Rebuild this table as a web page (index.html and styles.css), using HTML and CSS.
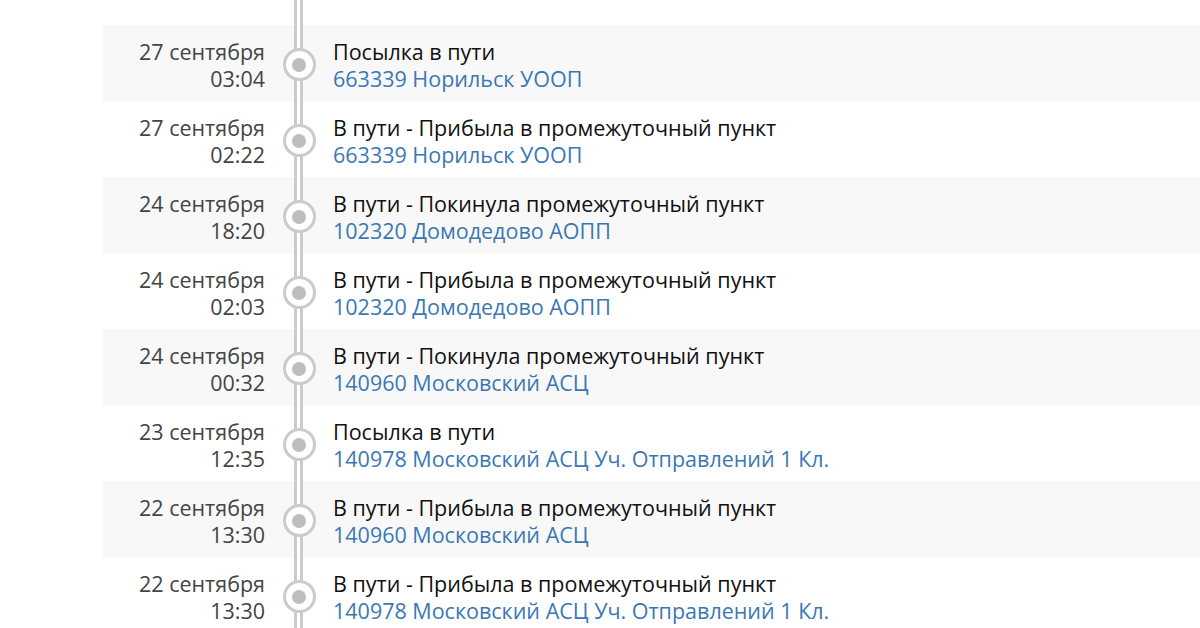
FILE: index.html
```html
<!DOCTYPE html>
<html lang="ru">
<head>
<meta charset="utf-8">
<link rel="stylesheet" href="styles.css">
</head>
<body>
<div class="track">
  <div class="row spacer"><div class="date"></div><div class="axis"></div><div class="info"></div></div>

  <div class="row alt">
    <div class="date">27 сентября<br>03:04</div>
    <div class="axis"><span class="dot"></span></div>
    <div class="info"><div class="title">Посылка в пути</div><div class="place">663339 Норильск УООП</div></div>
  </div>
  <div class="row">
    <div class="date">27 сентября<br>02:22</div>
    <div class="axis"><span class="dot"></span></div>
    <div class="info"><div class="title">В пути - Прибыла в промежуточный пункт</div><div class="place">663339 Норильск УООП</div></div>
  </div>
  <div class="row alt">
    <div class="date">24 сентября<br>18:20</div>
    <div class="axis"><span class="dot"></span></div>
    <div class="info"><div class="title">В пути - Покинула промежуточный пункт</div><div class="place">102320 Домодедово АОПП</div></div>
  </div>
  <div class="row">
    <div class="date">24 сентября<br>02:03</div>
    <div class="axis"><span class="dot"></span></div>
    <div class="info"><div class="title">В пути - Прибыла в промежуточный пункт</div><div class="place">102320 Домодедово АОПП</div></div>
  </div>
  <div class="row alt">
    <div class="date">24 сентября<br>00:32</div>
    <div class="axis"><span class="dot"></span></div>
    <div class="info"><div class="title">В пути - Покинула промежуточный пункт</div><div class="place">140960 Московский АСЦ</div></div>
  </div>
  <div class="row">
    <div class="date">23 сентября<br>12:35</div>
    <div class="axis"><span class="dot"></span></div>
    <div class="info"><div class="title">Посылка в пути</div><div class="place">140978 Московский АСЦ Уч. Отправлений 1 Кл.</div></div>
  </div>
  <div class="row alt">
    <div class="date">22 сентября<br>13:30</div>
    <div class="axis"><span class="dot"></span></div>
    <div class="info"><div class="title">В пути - Прибыла в промежуточный пункт</div><div class="place">140960 Московский АСЦ</div></div>
  </div>
  <div class="row">
    <div class="date">22 сентября<br>13:30</div>
    <div class="axis"><span class="dot"></span></div>
    <div class="info"><div class="title">В пути - Прибыла в промежуточный пункт</div><div class="place">140978 Московский АСЦ Уч. Отправлений 1 Кл.</div></div>
  </div>
</div>
</body>
</html>
```

FILE: styles.css
```css
html, body {
  margin: 0;
  padding: 0;
  background: #ffffff;
}
body {
  font-family: "Open Sans", "DejaVu Sans", sans-serif;
  font-size: 21.5px;
  line-height: 27px;
  overflow: hidden;
  height: 628px;
}
.track {
  display: flex;
  flex-direction: column;
  padding-left: 103px;
}
.row {
  display: grid;
  grid-template-columns: 162px 68px 1fr;
  height: 76px;
}
.row.spacer {
  height: 25px;
}
.row.alt {
  background: #f8f8f8;
}
.date {
  text-align: right;
  color: #444444;
  padding-top: 13px;
}
.axis {
  display: flex;
  align-items: center;
  justify-content: center;
  background-image: linear-gradient(to right,
    transparent 29px, #cbcbcb 29px, #cbcbcb 32px,
    #ffffff 32px, #ffffff 35px,
    #cbcbcb 35px, #cbcbcb 38px, transparent 38px);
  padding-top: 3px;
}
.dot {
  width: 27px;
  height: 27px;
  border: 3px solid #cbcbcb;
  border-radius: 50%;
  background: #ffffff;
  display: flex;
  align-items: center;
  justify-content: center;
}
.dot::after {
  content: "";
  width: 14px;
  height: 14px;
  border-radius: 50%;
  background: #bdbdbd;
}
.info {
  padding-top: 13px;
  white-space: nowrap;
}
.title {
  color: #111111;
}
.place {
  color: #3b78b3;
}
```
